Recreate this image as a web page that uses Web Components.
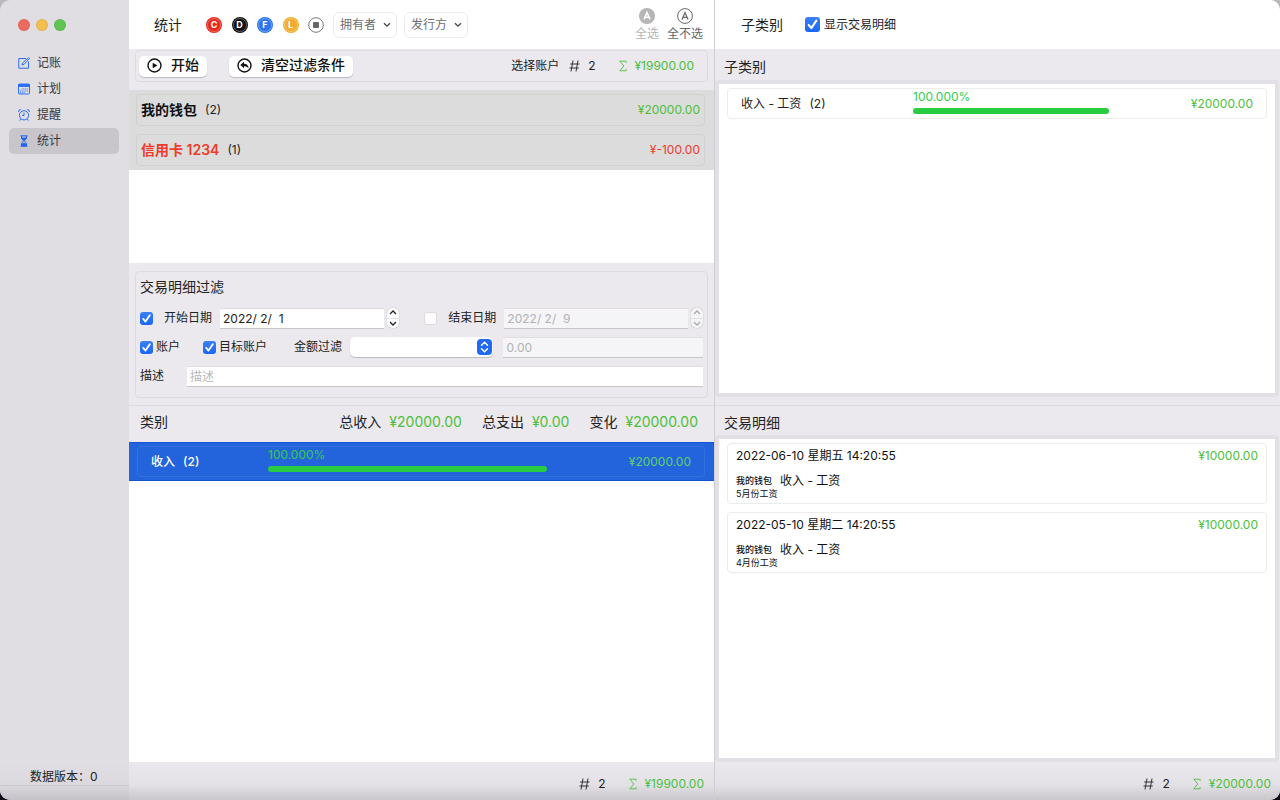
<!DOCTYPE html>
<html lang="zh-CN">
<head>
<meta charset="utf-8">
<title>统计</title>
<style>
  html, body { height: 100%; margin: 0; }
  body {
    font: 12px/16px Inter, "Noto Sans CJK SC", sans-serif;
    color: #222;
    background: linear-gradient(#b9b8bc 50%, #0b0b18 50%);
    --panel: #ebe9ee;
    --line: #dddbe0;
    --green: #4cc038;
    --red: #ee3b2b;
    --blue: #2169f0;
  }
</style>
</head>
<body>
<ledger-app></ledger-app>
<script>
const define = (name, html, setup) => {
  const template = document.createElement('template');
  template.innerHTML = '<style>*{box-sizing:border-box}svg{display:block;flex:none}</style>' + html;
  customElements.define(name, class extends HTMLElement {
    constructor() {
      super();
      this.attachShadow({ mode: 'open' }).append(template.content.cloneNode(true));
    }
    connectedCallback() {
      if (setup && !this.ready) { this.ready = true; setup(this, this.shadowRoot); }
    }
  });
};

/* Window buttons */
define('traffic-lights', `
<style>
  :host { display: flex; gap: 6px; }
  button { width: 12px; height: 12px; padding: 0; border: 1px solid #0001; border-radius: 50%; background: #ed6a5e; }
  button:nth-of-type(2) { background: #f4bf4f; }
  button:nth-of-type(3) { background: #61c554; }
</style>
<button aria-label="关闭"></button><button aria-label="最小化"></button><button aria-label="缩放"></button>`);

/* Sidebar entry */
define('nav-item', `
<style>
  :host { display: block; }
  a { display: flex; align-items: center; gap: 7px; height: 26px; padding: 0 9px; border-radius: 5px; color: #38373a; text-decoration: none; }
  :host([current]) a { background: #c8c6cb; }
</style>
<a href="#"><slot name="icon"></slot><slot></slot></a>`);

/* Sidebar */
define('side-bar', `
<style>
  :host { display: flex; flex-direction: column; background: #e0dee3; }
  traffic-lights { padding: 19px 18px; }
  nav { padding: 0 10px 0 9px; }
  footer { margin-top: auto; height: 38px; padding-top: 7px; background: linear-gradient(#e0dee3, #dbd9de 60%, #c4c2c7); }
  footer div { padding-left: 30px; border-bottom: 1px solid #c8c6cb; line-height: 16px; }
</style>
<traffic-lights></traffic-lights>
<nav>
  <nav-item><svg slot="icon" width="12" height="12" viewBox="0 0 12 12" fill="none" stroke="#2c6ff5"><path d="M8 1.5H.8v9.7h9.7V4.5M4 8l.5-2L10.6.6l.9.9L6 7.4z"/></svg>记账</nav-item>
  <nav-item><svg slot="icon" width="12" height="12" viewBox="0 0 12 12"><rect x=".5" y="1" width="11" height="10" rx="1" fill="none" stroke="#2c6ff5"/><path fill="#2c6ff5" d="M0 1h12v3H0z"/><path d="M3.500 6H10M2 8h8M2 9.700h5" stroke="#2c6ff5" stroke-dasharray="1 .8"/></svg>计划</nav-item>
  <nav-item><svg slot="icon" width="12" height="12" viewBox="0 0 12 12" fill="none" stroke="#2c6ff5"><circle cx="6" cy="6.300" r="4.600"/><path d="M6 3.500v3H4M.6 3A2 2 0 0 1 3 .7M11.400 3A2 2 0 0 0 9 .7M2.800 10l-1.200 1.600M9.200 10l1.200 1.600"/></svg>提醒</nav-item>
  <nav-item current><svg slot="icon" width="12" height="12" viewBox="0 0 12 12" fill="none" stroke="#1d62f3"><path d="M2.500.8h7M2.500 11.200h7M3.500 1v2C3.500 4.500 5.400 5 5.400 6S3.500 7.500 3.500 9v2M8.500 1v2C8.500 4.500 6.600 5 6.600 6S8.500 7.500 8.500 9v2"/><path fill="#1d62f3" d="M4 3h4L6 5.500zM4 10.800V9.500l2-1.500 2 1.500v1.300z"/></svg>统计</nav-item>
</nav>
<footer><div>数据版本：0</div></footer>`);

/* Round letter filter */
define('letter-toggle', `
<style>
  :host { display: block; width: 16px; height: 16px; }
  button { display: grid; place-items: center; width: 16px; height: 16px; padding: 0; border: 0; border-radius: 50%; background: var(--tone); color: #fff; font: 700 9px/12px Inter, sans-serif; }
  span { display: grid; place-items: center; width: 14px; height: 14px; border: 1px solid #ffffff50; border-radius: 50%; }
</style>
<button><span><slot></slot></span></button>`);

/* Toolbar drop-down */
define('tool-select', `
<style>
  :host { display: grid; height: 26px; width: 64px; align-items: center; }
  select, svg { grid-area: 1 / 1; }
  select { appearance: none; width: 100%; height: 26px; padding: 0 6px; border: 1px solid #ededed; border-radius: 6px; background: #fff; color: #6d6d6d; font: inherit; }
  svg { justify-self: end; margin-right: 6px; pointer-events: none; }
</style>
<select><option></option></select>
<svg width="8" height="6" viewBox="0 0 8 6" fill="none" stroke="#444" stroke-width="1.300"><path d="M1 1.200l3 3 3-3"/></svg>`,
(host, root) => {
  root.querySelector('option').textContent = host.getAttribute('label');
  root.querySelector('select').setAttribute('aria-label', host.getAttribute('label'));
});

/* Tick box with label */
define('check-box', `
<style>
  :host { display: block; }
  label { display: flex; align-items: center; gap: var(--gap, 3px); white-space: nowrap; }
  span { display: grid; flex: none; }
  input, svg { grid-area: 1 / 1; width: var(--size, 13px); height: var(--size, 13px); }
  input { appearance: none; margin: 0; border: 1px solid #dcdadf; border-radius: 3px; background: #fff; }
  input:checked { border: 0; background: linear-gradient(#3b80f7, #1a66f5); }
  svg { visibility: hidden; pointer-events: none; }
  input:checked + svg { visibility: visible; }
</style>
<label><span><input type="checkbox"><svg viewBox="0 0 13 13" fill="none" stroke="#fff" stroke-width="1.800" stroke-linecap="round" stroke-linejoin="round"><path d="M3.200 6.900l2.300 2.700 4.300-6.400"/></svg></span><slot></slot></label>`,
(host, root) => { root.querySelector('input').checked = host.hasAttribute('checked'); });

/* Count and total */
define('count-sum', `
<style>
  :host { display: flex; align-items: center; }
  .count { margin: 0 23px 0 8px; }
  .sum { margin-left: 8px; color: var(--green); }
</style>
<svg width="11" height="12" viewBox="0 0 11 12" fill="none" stroke="#333"><path d="M4 .5l-2 11M9 .5l-2 11M1.200 4h9.300M.5 8h9.300"/></svg>
<span class="count"><slot name="count"></slot></span>
<svg width="8" height="12" viewBox="0 0 9 12" fill="none" stroke="#4cc038"><path d="M8 2.500V.6H.9L5.500 6 .9 11.400H8V9.500"/></svg>
<span class="sum"><slot></slot></span>`);

/* Account in the selection list */
define('account-row', `
<style>
  :host { display: block; padding: 4px 9px 4px 7px; background: #dcdcdc; --tone: var(--green); }
  :host([negative]) { --tone: var(--red); --name: var(--red); }
  div { display: flex; align-items: center; gap: 8px; height: 32px; padding: 0 4px; border: 1px solid #d0d0d0; border-radius: 4px; }
  b { font-size: 14px; font-weight: 600; color: var(--name, #111); }
  .amount { margin-left: auto; color: var(--tone); }
</style>
<div><b><slot></slot></b><slot name="count"></slot><span class="amount"><slot name="amount"></slot></span></div>`);

/* Category with its share bar */
define('category-row', `
<style>
  :host { display: block; }
  div { display: grid; grid-template-columns: var(--label-width, 172px) minmax(0, 1fr) 144px; align-items: center; height: 31px; padding: 0 13px; border: 1px solid #ececec; border-radius: 4px; }
  section { align-self: start; line-height: 15px; color: #35cc4b; }
  i { display: block; height: 6px; margin-top: 4px; border-radius: 3px; background: #28cc41; }
  .amount { justify-self: end; color: var(--green); }
  :host([selected]) { padding: 3px 9px 3px 8px; background: #2364dc; border: solid #1453d2; border-width: 1px 0; color: #fff; }
  :host([selected]) div { border-color: #3570df; }
  :host([selected]) span:first-child { font-weight: 500; }
  :host([selected]) .amount { color: #5fd06a; }
</style>
<div><span><slot></slot></span><section><slot name="share"></slot><i></i></section><span class="amount"><slot name="amount"></slot></span></div>`);

/* Single transaction */
define('transaction-card', `
<style>
  :host { display: block; height: 61px; padding: 4px 8px; border: 1px solid #ececec; border-radius: 4px; color: #111; }
  .top { display: flex; justify-content: space-between; }
  .mid { display: flex; gap: 8px; align-items: center; margin-top: 9px; }
  .top span:last-child { color: var(--green); }
  small { display: block; font-size: 9px; line-height: 10px; }
  .mid small { font-weight: 500; }
</style>
<div class="top"><span><slot name="date"></slot></span><span><slot name="amount"></slot></span></div>
<div class="mid"><small><slot name="account"></slot></small><slot></slot></div>
<small><slot name="note"></slot></small>`);

/* Up / down stepper */
define('value-stepper', `
<style>
  :host { display: grid; width: 12px; height: 20px; border-radius: 5px; overflow: hidden; background: #fff; box-shadow: 0 0 1px #0006; color: #222; }
  :host([disabled]) { background: #f4f3f6; color: #aaa; }
  button { display: grid; place-items: center; padding: 0; border: 0; background: none; color: inherit; }
  button + button { border-top: 1px solid #e3e1e6; }
</style>
<button aria-label="增加"><svg width="8" height="5" viewBox="0 0 8 5" fill="none" stroke="currentColor" stroke-width="1.300"><path d="M1 4l3-3 3 3"/></svg></button>
<button aria-label="减少"><svg width="8" height="5" viewBox="0 0 8 5" fill="none" stroke="currentColor" stroke-width="1.300"><path d="M1 1l3 3 3-3"/></svg></button>`,
(host, root) => root.querySelectorAll('button').forEach(b => { b.disabled = host.hasAttribute('disabled'); }));

/* Transaction filter form */
define('filter-panel', `
<style>
  :host { display: block; padding: 8px 6px 7px; border-bottom: 1px solid var(--line); background: var(--panel); }
  form { height: 127px; padding: 5px 4px; border: 1px solid var(--line); border-radius: 4px; }
  h2 { margin: 0 0 10px; font-size: 14px; font-weight: 400; line-height: 20px; }
  .row { display: flex; align-items: center; height: 22px; margin-bottom: 7px; white-space: nowrap; }
  .row > * { flex: none; }
  input { width: 0; height: 21px; padding: 0 3px; border: solid #dfdde2; border-width: 1px 0; border-bottom-color: #c8c6cb; border-radius: 0; background: #fff; color: #222; font: inherit; }
  input:disabled { background: #f5f4f7; color: #b3b2b5; }
  input::placeholder { color: #b9b9bb; }
  .row > .start { flex: 164 1 0; }
  .row > .end { flex: 184 1 0; }
  check-box.date { --gap: 0px; }
  .picker { display: grid; align-items: center; }
  .row > .picker { flex: 146 1 0; }
  .row > .amount { flex: 197 1 0; }
  .row > .text { flex: 1; }
  select, .picker svg { grid-area: 1 / 1; }
  select { appearance: none; width: 100%; height: 20px; border: 0; border-radius: 5px; background: #fff; box-shadow: 0 1px 1px #0003; font: inherit; }
  .picker svg { justify-self: end; margin-right: 1px; pointer-events: none; }
</style>
<form>
  <h2>交易明细过滤</h2>
  <div class="row">
    <check-box class="date" checked style="margin-right:11px"></check-box>
    <label for="from" style="margin-right:8px">开始日期</label>
    <input class="start" id="from" value="2022/ 2/  1">
    <value-stepper style="margin:0 25px 0 3px"></value-stepper>
    <check-box class="date" style="margin-right:11px"></check-box>
    <label for="to" style="margin-right:8px">结束日期</label>
    <input class="end" id="to" value="2022/ 2/  9" disabled>
    <value-stepper disabled style="margin-left:3px"></value-stepper>
  </div>
  <div class="row">
    <check-box checked style="margin-right:23px">账户</check-box>
    <check-box checked style="margin-right:27px">目标账户</check-box>
    <label for="kind" style="margin-right:8px">金额过滤</label>
    <span class="picker"><select id="kind"><option></option></select>
      <svg width="15" height="16" viewBox="0 0 15 16"><rect width="15" height="16" rx="4" fill="#1f69f4"/><path d="M4.500 6.300l3-3 3 3M4.500 9.700l3 3 3-3" fill="none" stroke="#fff" stroke-width="1.500" stroke-linecap="round"/></svg></span>
    <input class="amount" aria-label="金额" value="0.00" disabled style="margin-left:10px">
  </div>
  <div class="row">
    <label for="memo" style="margin-right:23px">描述</label>
    <input class="text" id="memo" placeholder="描述">
  </div>
</form>`);

/* Main column: accounts, filter, categories */
define('account-pane', `
<style>
  :host { display: flex; flex-direction: column; border-right: 1px solid #cfcdd2; background: #fff; }
  header { display: flex; align-items: center; height: 49px; padding: 0 11px 0 25px; }
  h1 { margin: 0 24px 0 0; font-size: 14px; font-weight: 400; }
  .types { display: flex; justify-content: space-between; width: 118px; margin-right: 9px; }
  .types svg { width: 16px; }
  tool-select + tool-select { margin-left: 7px; }
  .pick { display: flex; gap: 8px; margin-left: auto; }
  .pick button { display: grid; justify-items: center; gap: 1px; padding: 0; border: 0; background: none; color: #666; font: inherit; }
  .pick button:disabled { color: #b5b5b5; }
  .bar { padding: 1px 6px 8px; background: var(--panel); }
  .bar > div { display: flex; align-items: center; height: 32px; padding: 0 13px 0 3px; border: 1px solid var(--line); border-radius: 4px; }
  .bar button { display: flex; align-items: center; gap: 9px; height: 21px; margin-right: 22px; padding: 0 8px 2px; border: 0; border-radius: 5px; background: #fff; box-shadow: 0 1px 1px #0003; color: #111; font: 500 14px/18px Inter, "Noto Sans CJK SC", sans-serif; }
  .bar p { margin: 0 10px 0 auto; }
  .accounts { height: 173px; }
  .totals { display: flex; align-items: center; gap: 20px; height: 36px; padding: 0 16px 4px 11px; background: var(--panel); font-size: 14px; white-space: nowrap; }
  .totals span:first-child { margin-right: auto; }
  em { margin-left: 8px; font-style: normal; color: var(--green); }
  category-row { --label-width: 117px; }
  footer { display: flex; justify-content: flex-end; align-items: center; height: 38px; margin-top: auto; padding: 5px 10px 0; background: linear-gradient(var(--panel), #e3e1e6 60%, #c9c7cc); }
</style>
<header>
  <h1>统计</h1>
  <div class="types">
    <letter-toggle style="--tone:#e9271c">C</letter-toggle><letter-toggle style="--tone:#111">D</letter-toggle><letter-toggle style="--tone:#2c74ee">F</letter-toggle><letter-toggle style="--tone:#f2ac2e">L</letter-toggle>
    <svg width="16" height="16" viewBox="0 0 16 16"><circle cx="8" cy="8" r="7.300" fill="#fff" stroke="#777"/><rect x="5" y="5" width="6" height="6" rx="1" fill="#666"/></svg>
  </div>
  <tool-select label="拥有者"></tool-select><tool-select label="发行方"></tool-select>
  <div class="pick">
    <button disabled><svg width="16" height="17" viewBox="0 0 16 17"><circle cx="8" cy="8" r="8" fill="#b5b5b5"/><path d="M5 11.500l3-7 3 7M6 9.300h4" fill="none" stroke="#fff" stroke-width="1.500"/></svg>全选</button>
    <button><svg width="16" height="17" viewBox="0 0 16 17" fill="none" stroke="#666"><circle cx="8" cy="8" r="7.400"/><path d="M5 11.500l3-7 3 7M6 9.300h4" stroke-width="1.200"/></svg>全不选</button>
  </div>
</header>
<div class="bar"><div>
  <button><svg width="15" height="15" viewBox="0 0 15 15"><circle cx="7.500" cy="7.500" r="6.500" fill="none" stroke="#111" stroke-width="1.400"/><path d="M5.700 4.700l4.800 2.800-4.800 2.800z" fill="#111"/></svg>开始</button>
  <button><svg width="15" height="15" viewBox="0 0 15 15"><circle cx="7.500" cy="7.500" r="6.500" fill="none" stroke="#111" stroke-width="1.400"/><path d="M3.300 7l3.700-3.300v2c3 0 4.500 1.600 4.500 5C10.500 9 9.300 8.300 7 8.300v2z" fill="#111"/></svg>清空过滤条件</button>
  <p>选择账户</p>
  <count-sum><span slot="count">2</span>¥19900.00</count-sum>
</div></div>
<div class="accounts">
  <account-row>我的钱包<span slot="count">(2)</span><span slot="amount">¥20000.00</span></account-row>
  <account-row negative>信用卡 1234<span slot="count">(1)</span><span slot="amount">¥-100.00</span></account-row>
</div>
<filter-panel></filter-panel>
<div class="totals"><span>类别</span><span>总收入<em>¥20000.00</em></span><span>总支出<em>¥0.00</em></span><span>变化<em>¥20000.00</em></span></div>
<category-row selected>收入&ensp;&thinsp;(2)<span slot="share">100.000%</span><span slot="amount">¥20000.00</span></category-row>
<footer><count-sum><span slot="count">2</span>¥19900.00</count-sum></footer>`);

/* Right column: subcategories and transactions */
define('detail-pane', `
<style>
  :host { display: flex; flex-direction: column; background: var(--panel); }
  header { display: flex; align-items: center; gap: 22px; height: 49px; padding: 0 26px; background: #fff; }
  h1, h2 { margin: 0; font-size: 14px; font-weight: 400; }
  h2 { padding: 10px 9px 5px; }
  header check-box { --gap: 4px; --size: 15px; }
  .list { display: flex; flex-direction: column; gap: 8px; margin-right: 1px; padding: 4px 8px; border: 4px solid #e2e0e5; border-radius: 4px; background: #fff; }
  .subs { height: 317px; margin-bottom: 8px; }
  .txns { flex: 1; }
  .second { padding: 9px 9px 4px; border-top: 1px solid var(--line); }
  footer { display: flex; justify-content: flex-end; align-items: center; height: 38px; padding: 5px 9px 0; background: linear-gradient(var(--panel), #e3e1e6 60%, #c9c7cc); }
</style>
<header><h1>子类别</h1><check-box checked>显示交易明细</check-box></header>
<h2>子类别</h2>
<div class="list subs">
  <category-row>收入 - 工资&ensp;&thinsp;(2)<span slot="share">100.000%</span><span slot="amount">¥20000.00</span></category-row>
</div>
<h2 class="second">交易明细</h2>
<div class="list txns">
  <transaction-card><span slot="date">2022-06-10 星期五 14:20:55</span><span slot="amount">¥10000.00</span><span slot="account">我的钱包</span>收入 - 工资<span slot="note">5月份工资</span></transaction-card>
  <transaction-card><span slot="date">2022-05-10 星期二 14:20:55</span><span slot="amount">¥10000.00</span><span slot="account">我的钱包</span>收入 - 工资<span slot="note">4月份工资</span></transaction-card>
</div>
<footer><count-sum><span slot="count">2</span>¥20000.00</count-sum></footer>`);

define('ledger-app', `
<style>
  :host { display: grid; grid-template-columns: 129px minmax(0, 586fr) minmax(0, 565fr); min-height: 100vh; border-radius: 10px; overflow: hidden; }
</style>
<side-bar></side-bar><account-pane></account-pane><detail-pane></detail-pane>`);
</script>
</body>
</html>
